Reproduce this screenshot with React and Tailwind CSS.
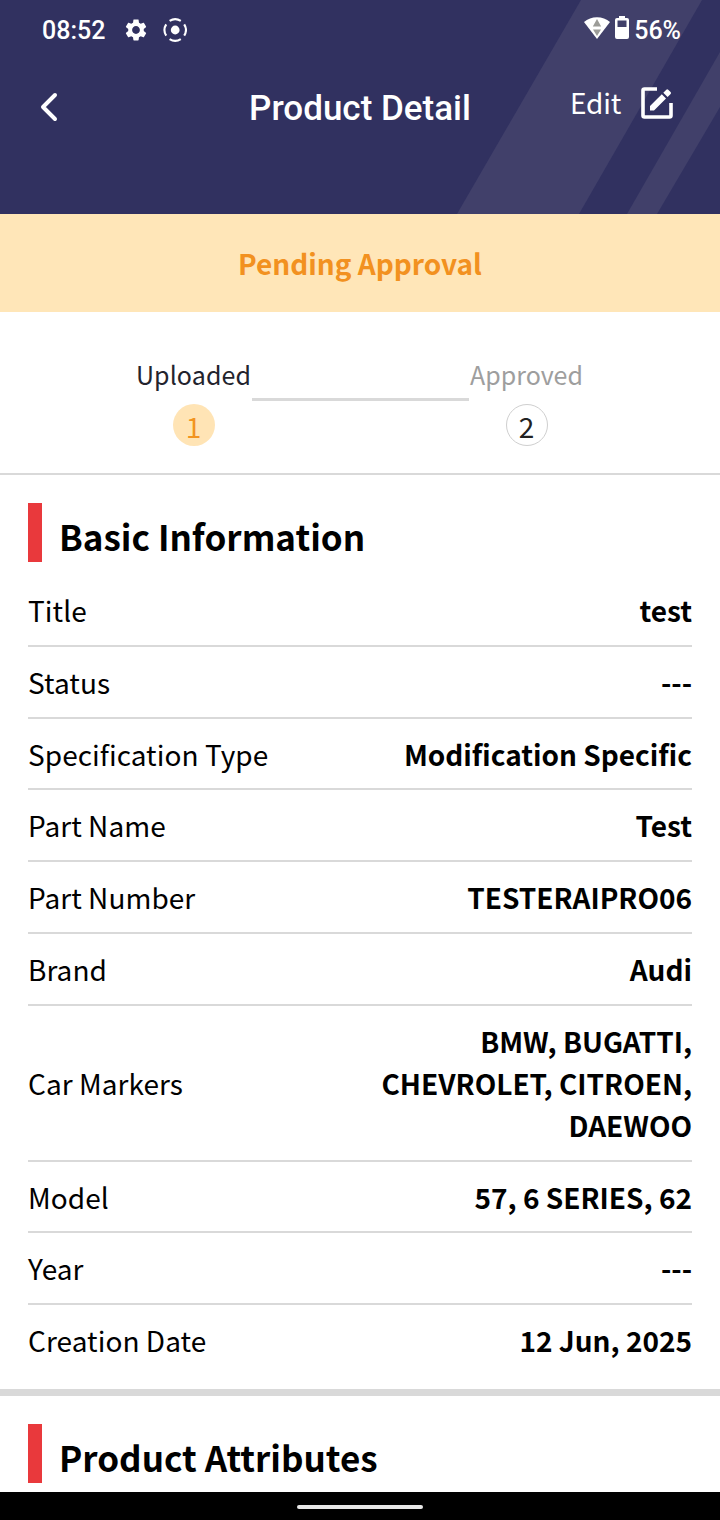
import React from 'react'

const basicInfo = [
  { label: 'Title', value: 'test' },
  { label: 'Status', value: '---' },
  { label: 'Specification Type', value: 'Modification Specific' },
  { label: 'Part Name', value: 'Test' },
  { label: 'Part Number', value: 'TESTERAIPRO06' },
  { label: 'Brand', value: 'Audi' },
  { label: 'Car Markers', value: 'BMW, BUGATTI, CHEVROLET, CITROEN, DAEWOO' },
  { label: 'Model', value: '57, 6 SERIES, 62' },
  { label: 'Year', value: '---' },
  { label: 'Creation Date', value: '12 Jun, 2025' },
]

const StatusBar = () => {
  return (
    <div className="flex h-[60px] items-center justify-between pl-[42px] pr-10 font-['Roboto',sans-serif] text-[25px] font-medium text-white">
      <div className="flex items-center">
        <span className="w-[81px] pt-0.5">08:52</span>
        <svg className="mb-px h-[26px] w-[26px]" viewBox="0 0 24 24" fill="currentColor">
          <path d="M19.14 12.94c.04-.3.06-.61.06-.94 0-.32-.02-.64-.07-.94l2.03-1.58c.18-.14.23-.41.12-.61l-1.92-3.32c-.12-.22-.37-.29-.59-.22l-2.39.96c-.5-.38-1.03-.7-1.62-.94l-.36-2.54c-.04-.24-.24-.41-.48-.41h-3.84c-.24 0-.43.17-.47.41l-.36 2.54c-.59.24-1.13.57-1.62.94l-2.39-.96c-.22-.08-.47 0-.59.22L2.74 8.87c-.12.21-.08.47.12.61l2.03 1.58c-.05.3-.09.63-.09.94s.02.64.07.94l-2.03 1.58c-.18.14-.23.41-.12.61l1.92 3.32c.12.22.37.29.59.22l2.39-.96c.5.38 1.03.7 1.62.94l.36 2.54c.05.24.24.41.48.41h3.84c.24 0 .44-.17.47-.41l.36-2.54c.59-.24 1.13-.56 1.62-.94l2.39.96c.22.08.47 0 .59-.22l1.92-3.32c.12-.22.07-.47-.12-.61l-2.01-1.58zM12 15.6c-1.98 0-3.6-1.62-3.6-3.6s1.62-3.6 3.6-3.6 3.6 1.62 3.6 3.6-1.62 3.6-3.6 3.6z" />
        </svg>
        <svg className="mb-px ml-[14px] h-6 w-6" viewBox="0 0 24 24" fill="none" stroke="currentColor" strokeWidth="2.1">
          <circle cx="12.2" cy="12" r="4.4" fill="currentColor" stroke="none" />
          <path d="M6.6 2.9a10.4 10.4 0 0 1 11.2 0M21.2 6.4a10.4 10.4 0 0 1 0 11.2M17.8 21.1a10.4 10.4 0 0 1-11.2 0M3.2 17.6a10.4 10.4 0 0 1 0-11.2" />
        </svg>
      </div>
      <div className="flex items-center">
        <svg className="mb-[5px] h-[22px] w-[26px]" viewBox="0 0 26 22">
          <path d="M0 5C7-1.3 19-1.3 26 5L13 22z" fill="#fff" />
          <path d="M13 2l4.2 7.5H8.8zM9 12.5h8L13 19z" fill="#9c9c98" />
        </svg>
        <svg className="mb-[5px] ml-[5px] h-[23px] w-[14px]" viewBox="0 0 14 23">
          <path d="M4 0h6v2h2a2 2 0 0 1 2 2v17a2 2 0 0 1-2 2H2a2 2 0 0 1-2-2V4a2 2 0 0 1 2-2h2z" fill="#fff" />
          <path d="M2.5 4.5h9v6.5h-9z" fill="#41406a" />
        </svg>
        <span className="-mr-px ml-1 pl-px pt-0.5">56%</span>
      </div>
    </div>
  )
}

const Header = () => {
  return (
    <div className="relative h-[214px] bg-[#313160]">
      <svg className="absolute inset-0 h-full w-full" viewBox="0 0 720 214" fill="#41406a">
        <path d="M581 0H702L579 214H457z" />
        <path d="M720 52V107L657 214H627z" />
      </svg>
      <div className="relative">
        <StatusBar />
        <div className="grid h-24 grid-cols-[1fr_auto_1fr] items-center pl-10 pr-[46px] text-white">
          <svg className="mb-0.5 h-[30px] w-[18px]" viewBox="0 0 18 30" fill="none" stroke="currentColor" strokeWidth="4" strokeLinecap="round" strokeLinejoin="round">
            <path d="M15 3L3 15L15 27" />
          </svg>
          <h1 className="pl-[6px] pt-0.5 font-['Roboto',sans-serif] text-[35px] font-medium">Product Detail</h1>
          <div className="mb-[10px] flex items-center justify-end">
            <span className="pb-0.5 text-[28px] tracking-[-0.2px]">Edit</span>
            <svg className="ml-5 mr-px h-8 w-8" viewBox="0 0 32 32">
              <path d="M16 2H3.5A1.5 1.5 0 0 0 2 3.500V28.500A1.500 1.500 0 0 0 3.500 30H28.500A1.500 1.500 0 0 0 30 28.500V16" fill="none" stroke="currentColor" strokeWidth="3.6" />
              <path d="M9 19L20.800 7.200L25 11.400L13 23.400H9zM22.300 5.700L25.300 2.700A1.400 1.400 0 0 1 27.200 2.700L29.600 5.100A1.400 1.400 0 0 1 29.600 7L26.600 10z" fill="currentColor" />
            </svg>
          </div>
        </div>
      </div>
    </div>
  )
}

const Steps = () => {
  return (
    <div className="flex h-[163px] justify-center border-b-2 border-[#d9d9d9] pt-[41px] text-[25px]">
      <div className="flex w-[116px] flex-col items-center">
        <span className="h-[51px] leading-[42px] tracking-[0.1px] text-[#23232d]">Uploaded</span>
        <span className="flex h-[42px] w-[42px] items-center justify-center rounded-full bg-[#ffe4b5] pt-0.5 text-[28px] text-[#f29420]">1</span>
      </div>
      <div className="mt-[45px] h-[3px] w-[217px] bg-[#d9d9d9]"></div>
      <div className="flex w-[116px] flex-col items-center">
        <span className="h-[51px] leading-[42px] text-[#9e9e9e]">Approved</span>
        <span className="flex h-[42px] w-[42px] items-center justify-center rounded-full border-[1.5px] border-[#cfcfcf] pt-0.5 text-[28px] text-[#222]">2</span>
      </div>
    </div>
  )
}

const SectionTitle = ({ children }) => {
  return (
    <div className="flex h-[59px]">
      <div className="w-[14px] bg-[#e9393c]"></div>
      <h2 className="ml-[17px] pt-[7px] text-[35px] font-bold leading-[52px]">{children}</h2>
    </div>
  )
}

const InfoRow = ({ label, value }) => {
  return (
    <div className="flex items-center justify-between border-b-2 border-[#d9d9d9] pb-[13.8px] pt-[14px] text-[28px] leading-[42px] last:border-b-0">
      <span className="tracking-[0.05px]">{label}</span>
      <span className="max-w-[332px] text-right font-bold">{value}</span>
    </div>
  )
}

const App = () => {
  return (
    <div className="flex h-[1520px] w-[720px] flex-col overflow-hidden bg-white font-['Noto_Sans_CJK_SC',sans-serif] text-black">
      <Header />
      <div className="flex h-[98px] items-center justify-center bg-[#ffe6b8] text-[28px] font-bold text-[#f29120]">
        Pending Approval
      </div>
      <Steps />
      <div className="h-[914px] shrink-0 px-7 pt-7">
        <SectionTitle>Basic Information</SectionTitle>
        <div className="mt-[13px]">
          {basicInfo.map((row) => (
            <InfoRow key={row.label} label={row.label} value={row.value} />
          ))}
        </div>
      </div>
      <div className="h-[7px] shrink-0 bg-[#d9d9d9]"></div>
      <div className="h-24 shrink-0 px-7 pt-7">
        <SectionTitle>Product Attributes</SectionTitle>
      </div>
      <div className="flex h-7 shrink-0 items-center justify-center bg-black">
        <div className="mt-0.5 h-1 w-[126px] rounded-full bg-[#e8e8e8]"></div>
      </div>
    </div>
  )
}

export default App
